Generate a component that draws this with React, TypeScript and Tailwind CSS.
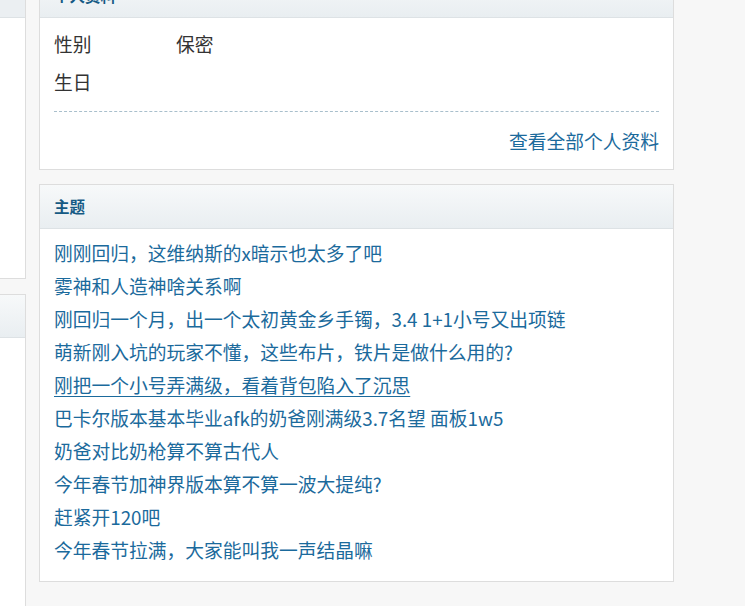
import React from "react";

const topics = [
  { title: "刚刚回归，这维纳斯的x暗示也太多了吧" },
  { title: "雾神和人造神啥关系啊" },
  { title: "刚回归一个月，出一个太初黄金乡手镯，3.4 1+1小号又出项链" },
  { title: "萌新刚入坑的玩家不懂，这些布片，铁片是做什么用的?" },
  { title: "刚把一个小号弄满级，看着背包陷入了沉思", hover: true },
  { title: "巴卡尔版本基本毕业afk的奶爸刚满级3.7名望 面板1w5" },
  { title: "奶爸对比奶枪算不算古代人" },
  { title: "今年春节加神界版本算不算一波大提纯?" },
  { title: "赶紧开120吧" },
  { title: "今年春节拉满，大家能叫我一声结晶嘛" },
];

function PanelHeader({ title }: { title: string }) {
  return (
    <div className="h-[44px] flex items-center px-[14px] border-b border-[#dde2e5] bg-gradient-to-b from-[#f7f9fa] to-[#e9eef1]">
      <span className="text-[15.5px] font-bold text-[#155a84]">{title}</span>
    </div>
  );
}

export default function App() {
  return (
    <div
      className="flex h-[606px] w-[745px] overflow-hidden bg-[#f7f7f7]"
      style={{ fontFamily: '"Noto Sans CJK SC", "Noto Sans", sans-serif' }}
    >
      {/* clipped left column */}
      <div className="w-[26px] flex flex-col gap-[15px]">
        <div className="h-[279px] bg-white border-r border-b border-[#dddddd]">
          <div className="h-[18px] bg-[#ebeff2] border-b border-[#dde2e5]"></div>
        </div>
        <div className="flex-1 bg-white border-r border-t border-[#dddddd]">
          <div className="h-[43px] bg-gradient-to-b from-[#f7f9fa] to-[#e9eef1] border-b border-[#dde2e5]"></div>
        </div>
      </div>

      <div className="ml-[13px] w-[635px] flex flex-col gap-[14px] -mt-[27px]">
        {/* profile */}
        <div className="bg-white border border-[#dddddd]">
          <PanelHeader title="个人资料" />
          <div className="px-[14px] pt-[7px] pb-[13px] text-[18.75px] text-[#333333]">
            <div className="flex h-[38px] items-center">
              <span className="w-[122px]">性别</span>
              <span>保密</span>
            </div>
            <div className="flex h-[38px] items-center">
              <span className="w-[122px]">生日</span>
            </div>
            <div className="mt-[10px] border-t border-dashed border-[#a9bfcc]"></div>
            <div className="mt-[14px] h-[30px] flex items-center justify-end">
              <a className="text-[#1b6a9c] cursor-pointer">查看全部个人资料</a>
            </div>
          </div>
        </div>

        {/* topics */}
        <div className="bg-white border border-[#dddddd]">
          <PanelHeader title="主题" />
          <ul className="px-[14px] pt-[7px] pb-[15px] text-[18.75px] text-[#1b6a9c]">
            {topics.map((t) => (
              <li key={t.title} className="h-[33px] leading-[33px] whitespace-nowrap">
                <a className={t.hover ? "underline underline-offset-[3px] cursor-pointer" : "cursor-pointer"}>
                  {t.title}
                </a>
              </li>
            ))}
          </ul>
        </div>
      </div>
    </div>
  );
}
